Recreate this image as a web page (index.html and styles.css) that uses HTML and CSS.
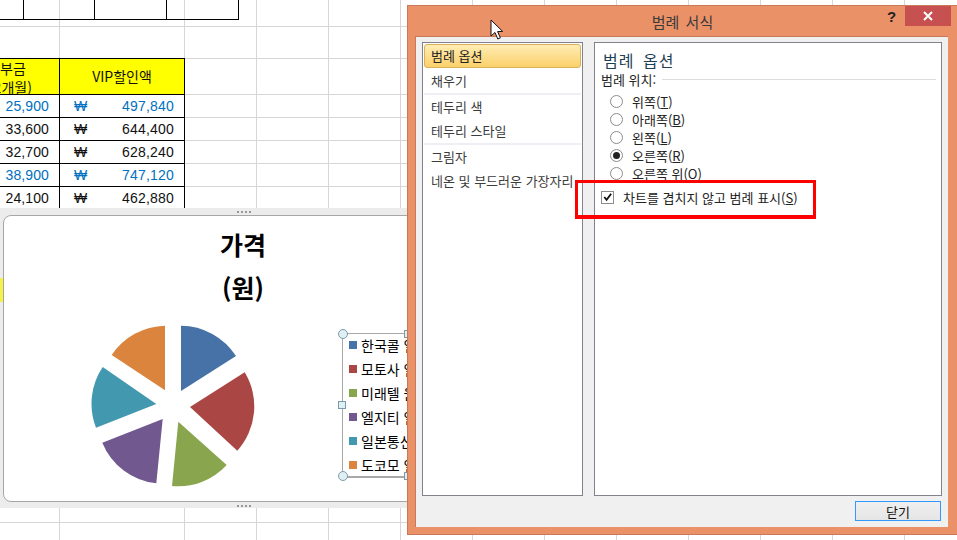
FILE: index.html
```html
<!DOCTYPE html>
<html lang="ko">
<head>
<meta charset="utf-8">
<title>범례 서식</title>
<link rel="stylesheet" href="styles.css">
</head>
<body>
<div class="sheet">
  <div class="top-row">
    <div class="top-cell c1"></div>
    <div class="top-cell c2"></div>
    <div class="top-cell c3"></div>
    <div class="top-cell c4"></div>
  </div>
  <table class="price">
    <colgroup><col class="col-a"><col class="col-b"></colgroup>
    <tr class="head">
      <th><div class="head-text">납부금<br>(12개월)</div></th>
      <th>VIP할인액</th>
    </tr>
    <tr class="blue"><td class="num">25,900</td><td><div class="money"><span>₩</span><span>497,840</span></div></td></tr>
    <tr><td class="num">33,600</td><td><div class="money"><span>₩</span><span>644,400</span></div></td></tr>
    <tr><td class="num">32,700</td><td><div class="money"><span>₩</span><span>628,240</span></div></td></tr>
    <tr class="blue"><td class="num">38,900</td><td><div class="money"><span>₩</span><span>747,120</span></div></td></tr>
    <tr><td class="num">24,100</td><td><div class="money"><span>₩</span><span>462,880</span></div></td></tr>
    <tr class="tail"><td></td><td></td></tr>
  </table>
</div>

<div class="chart-frame">
  <div class="grip"></div>
  <div class="chart">
    <div class="chart-title">가격</div>
    <div class="chart-title">(원)</div>
    <svg class="pie" viewBox="88 320 175 175" width="175" height="175">
      <path fill="#4672A8" d="M181 391 L181 325.7 A66 66 0 0 1 236 356 Z"/>
      <path fill="#AA4643" d="M190 407 L244.7 372.3 A66 66 0 0 1 237.3 450.7 Z"/>
      <path fill="#89A54E" d="M178.3 421.7 L226.7 465 A66 66 0 0 1 172 486 Z"/>
      <path fill="#71588F" d="M162.7 419 L156.3 483.3 A66 66 0 0 1 102.3 442.7 Z"/>
      <path fill="#4198AF" d="M156.3 404 L96 427.7 A66 66 0 0 1 102.7 367 Z"/>
      <path fill="#DB843D" d="M165 390.3 L111.7 355 A66 66 0 0 1 165 325.7 Z"/>
    </svg>
  </div>
  <div class="grip"></div>
  <div class="peek"></div>
  <div class="legend">
    <div class="legend-row"><i class="sw s1"></i>한국콜 일반</div>
    <div class="legend-row"><i class="sw s2"></i>모토사 일반</div>
    <div class="legend-row"><i class="sw s3"></i>미래텔 원가</div>
    <div class="legend-row"><i class="sw s4"></i>엘지티 일반</div>
    <div class="legend-row"><i class="sw s5"></i>일본통신 일</div>
    <div class="legend-row"><i class="sw s6"></i>도코모 일반</div>
    <i class="knob k-tl"></i><i class="knob k-bl"></i>
    <i class="sq q-l"></i><i class="sq q-t"></i><i class="sq q-b"></i>
  </div>
</div>

<div class="dialog">
  <div class="titlebar">범례 서식</div>
  <div class="help">?</div>
  <div class="close">
    <svg width="10" height="10" viewBox="0 0 10 10"><path d="M1 1 L9 9 M9 1 L1 9" stroke="#fff" stroke-width="2"/></svg>
  </div>
  <div class="client">
    <div class="panels">
      <div class="nav">
        <div class="nav-item selected">범례 옵션</div>
        <div class="nav-group">
          <div class="nav-item">채우기</div>
        </div>
        <div class="nav-group">
          <div class="nav-item">테두리 색</div>
          <div class="nav-item">테두리 스타일</div>
        </div>
        <div class="nav-item">그림자</div>
        <div class="nav-item">네온 및 부드러운 가장자리</div>
      </div>
      <div class="content">
        <div class="heading">범례 옵션</div>
        <div class="fieldset"><span>범례 위치:</span><i class="rule"></i></div>
        <div class="radios">
          <div class="radio-row"><i class="radio"></i><span>위쪽(<u>T</u>)</span></div>
          <div class="radio-row"><i class="radio"></i><span>아래쪽(<u>B</u>)</span></div>
          <div class="radio-row"><i class="radio"></i><span>왼쪽(<u>L</u>)</span></div>
          <div class="radio-row"><i class="radio on"></i><span>오른쪽(<u>R</u>)</span></div>
          <div class="radio-row"><i class="radio"></i><span>오른쪽 위(O)</span></div>
        </div>
        <div class="check-row">
          <i class="check"><svg width="12" height="12" viewBox="0 0 12 12"><path d="M2.5 6 L5 9 L10 2.5" fill="none" stroke="#111" stroke-width="2"/></svg></i>
          <span>차트를 겹치지 않고 범례 표시(<u>S</u>)</span>
        </div>
      </div>
    </div>
    <div class="footer"><div class="btn">닫기</div></div>
  </div>
</div>

<div class="redbox"></div>

<svg class="cursor" width="14" height="22" viewBox="0 0 14 22">
  <path d="M1 1 L1 17 L5 13.5 L7.8 20 L10.4 18.8 L7.6 12.6 L12.6 12.4 Z" fill="#fff" stroke="#111" stroke-width="1"/>
</svg>
</body>
</html>
```

FILE: styles.css
```css
* { box-sizing: border-box; }
html, body { margin: 0; padding: 0; }
body {
  position: relative;
  width: 957px;
  height: 540px;
  overflow: hidden;
  background: #fff;
  font-family: "Noto Sans CJK KR", "Liberation Sans", sans-serif;
  font-size: 13px;
  color: #222;
}
u { text-underline-offset: 1px; }
i { display: block; font-style: normal; }

/* worksheet */
.sheet {
  width: 957px;
  height: 540px;
  overflow: hidden;
  background-color: #fff;
  background-repeat: no-repeat;
  background-image:
    linear-gradient(#d6d6d6, #d6d6d6),
    linear-gradient(#d6d6d6, #d6d6d6),
    linear-gradient(#d6d6d6, #d6d6d6),
    linear-gradient(#d6d6d6, #d6d6d6),
    linear-gradient(#d6d6d6, #d6d6d6),
    linear-gradient(#d6d6d6, #d6d6d6),
    linear-gradient(#d6d6d6, #d6d6d6),
    linear-gradient(#d6d6d6, #d6d6d6),
    linear-gradient(#d6d6d6, #d6d6d6),
    linear-gradient(#d6d6d6, #d6d6d6),
    repeating-linear-gradient(to right, transparent 0 71px, #d6d6d6 71px 72px);
  background-size:
    100% 1px, 100% 1px, 100% 1px, 100% 1px, 100% 1px, 100% 1px, 100% 1px, 100% 1px, 100% 1px,
    1px 100%, 100% 100%;
  background-position:
    0 26px, 0 58px, 0 94px, 0 117px, 0 140px, 0 163px, 0 186px, 0 209px, 0 522px,
    59px 0, 113px 0;
}
.top-row { display: flex; height: 20px; border-bottom: 1px solid #000; width: 239px; }
.top-cell { border-right: 1px solid #000; }
.c1 { width: 24px; }
.c2 { width: 71px; }
.c3 { width: 72px; }
.c4 { width: 72px; }

.price {
  margin: 38px 0 0 -47px;
  border-collapse: collapse;
  table-layout: fixed;
  width: 231px;
  font-family: "Liberation Sans", "Noto Sans CJK KR", sans-serif;
  font-size: 14px;
  line-height: 20px;
  color: #111;
}
.col-a { width: 106px; }
.col-b { width: 125px; }
.price th, .price td { border: 1px solid #000; padding: 0; height: 23px; }
.price th {
  height: 36px;
  background: #ffff00;
  font-weight: 400;
  font-size: 14px;
  line-height: 17px;
  font-family: "Noto Sans CJK KR", "Liberation Sans", sans-serif;
}
.head-text { height: 34px; line-height: 19px; margin-top: -2px; }
.price .num { text-align: right; padding-right: 10px; letter-spacing: .1px; }
.money { display: flex; justify-content: space-between; height: 20px; overflow: hidden; padding: 0 10px 0 14px; letter-spacing: .2px; }
.blue td { color: #0070c0; }

/* embedded chart */
.chart-frame {
  position: absolute;
  left: 0;
  top: 208px;
  width: 486px;
  height: 300px;
  padding-left: 3px;
  background: #ececec;
}
.grip {
  height: 7px;
  margin: 0 auto;
  display: flex;
  justify-content: center;
  align-items: center;
}
.grip::before {
  content: "";
  width: 15px;
  height: 2px;
  background: repeating-linear-gradient(to right, #999 0 2px, transparent 2px 4px);
}
.chart {
  position: relative;
  height: 287px;
  background: #fff;
  border: 1px solid #a6a6a6;
  border-radius: 8px;
  padding: 7px 3px 0 0;
  text-align: center;
}
.chart-title {
  font-size: 25px;
  font-weight: 700;
  line-height: 43px;
  color: #000;
}
.pie { position: absolute; left: 84px; top: 104px; }
.peek { position: absolute; left: 0; top: 70px; width: 3px; height: 24px; background: #f2f24a; }

.legend {
  position: absolute;
  left: 342px;
  top: 125px;
  width: 90px;
  height: 145px;
  border: 1px solid #a8a8a8;
  border-bottom-width: 2px;
  padding: 0 0 0 6px;
  display: flex;
  flex-direction: column;
  font-size: 14px;
  color: #000;
  white-space: nowrap;
}
.legend-row { display: flex; align-items: center; gap: 4px; height: 24px; flex: none; }
.legend-row:first-child { margin-top: -1px; }
.sw { width: 8px; height: 8px; }
.s1 { background: #4672A8; }
.s2 { background: #AA4643; }
.s3 { background: #89A54E; }
.s4 { background: #71588F; }
.s5 { background: #4198AF; }
.s6 { background: #DB843D; }
.knob {
  position: absolute;
  width: 10px;
  height: 10px;
  border-radius: 50%;
  border: 1px solid #7d9aaa;
  background: #dff0f4;
}
.k-tl { left: -5px; top: -5px; }
.k-bl { left: -5px; bottom: -5px; }
.sq {
  position: absolute;
  width: 8px;
  height: 8px;
  border: 1px solid #7d9aaa;
  background: #dff0f4;
}
.q-l { left: -5px; top: 67px; }
.q-t { left: 61px; top: -4px; }
.q-b { left: 61px; bottom: -4px; }

/* format dialog */
.dialog {
  position: absolute;
  left: 407px;
  top: 5px;
  width: 550px;
  height: 530px;
  background: #ea9168;
  border: 1px solid #c87a58;
  border-right: 0;
  display: flex;
  flex-direction: column;
}
.titlebar {
  height: 30px;
  flex: none;
  display: flex;
  align-items: center;
  justify-content: center;
  font-size: 15px;
  word-spacing: 2px;
  color: #3a3a3a;
}
.help {
  position: absolute;
  left: 479px;
  top: 0;
  font: 700 15px/22px "Liberation Sans", sans-serif;
  color: #222;
}
.close {
  position: absolute;
  left: 497px;
  top: 0;
  width: 46px;
  height: 20px;
  background: #c75050;
  display: flex;
  align-items: center;
  justify-content: center;
}
.client {
  flex: 1;
  margin: 0 9px 8px 7px;
  padding: 5px 6px 6px 6px;
  background: #f0f0f0;
  border: 1px solid #c87a58;
  border-width: 1px 0 0 1px;
  display: flex;
  flex-direction: column;
}
.panels { display: flex; gap: 11px; height: 454px; flex: none; }
.nav {
  width: 161px;
  background: #fff;
  border: 1px solid #82828c;
  padding: 1px;
  color: #3c3c3c;
}
.nav-item { height: 24px; line-height: 24px; padding-left: 7px; white-space: nowrap; }
.nav-item.selected {
  line-height: 22px;
  padding-left: 6px;
  margin-bottom: 1px;
  color: #222;
  border: 1px solid #d9b25a;
  border-radius: 3px;
  background: linear-gradient(#ffedb4, #fbd06a);
}
.nav-group { border-bottom: 2px solid #eeeef4; }
.content {
  width: 348px;
  background: #fff;
  border: 1px solid #82828c;
  padding: 7px 5px 0 6px;
}
.heading { font-size: 16px; line-height: 20px; word-spacing: 3px; letter-spacing: 1px; color: #1f3f55; padding-left: 2px; }
.fieldset { display: flex; align-items: center; gap: 6px; height: 18px; color: #222; }
.rule { flex: 1; height: 1px; background: #dcdcdc; }
.radios { margin-top: 4px; padding-left: 9px; }
.radio-row { display: flex; align-items: center; gap: 9px; height: 18px; }
.radio {
  width: 13px;
  height: 13px;
  border-radius: 50%;
  border: 1px solid #8c8c8c;
  background: #fff;
  display: flex;
  align-items: center;
  justify-content: center;
}
.radio.on::before {
  content: "";
  width: 7px;
  height: 7px;
  border-radius: 50%;
  background: #222;
}
.check-row { display: flex; align-items: center; gap: 9px; height: 18px; margin-top: 6px; }
.check {
  width: 13px;
  height: 13px;
  border: 1px solid #8c8c8c;
  background: #fff;
  display: flex;
  align-items: center;
  justify-content: center;
}
.footer { display: flex; justify-content: flex-end; margin-top: 5px; padding-right: 1px; }
.btn {
  width: 86px;
  height: 20px;
  border: 1px solid #3399ff;
  background: linear-gradient(#f0f0f0, #e5e5e5);
  display: flex;
  align-items: center;
  justify-content: center;
  font-size: 13px;
  color: #111;
}

/* annotation and pointer, drawn above everything */
.redbox {
  position: absolute;
  left: 575px;
  top: 180px;
  width: 241px;
  height: 39px;
  border: 3px solid #f00;
  border-bottom-width: 4px;
}
.cursor { position: absolute; left: 490px; top: 19px; }
```
